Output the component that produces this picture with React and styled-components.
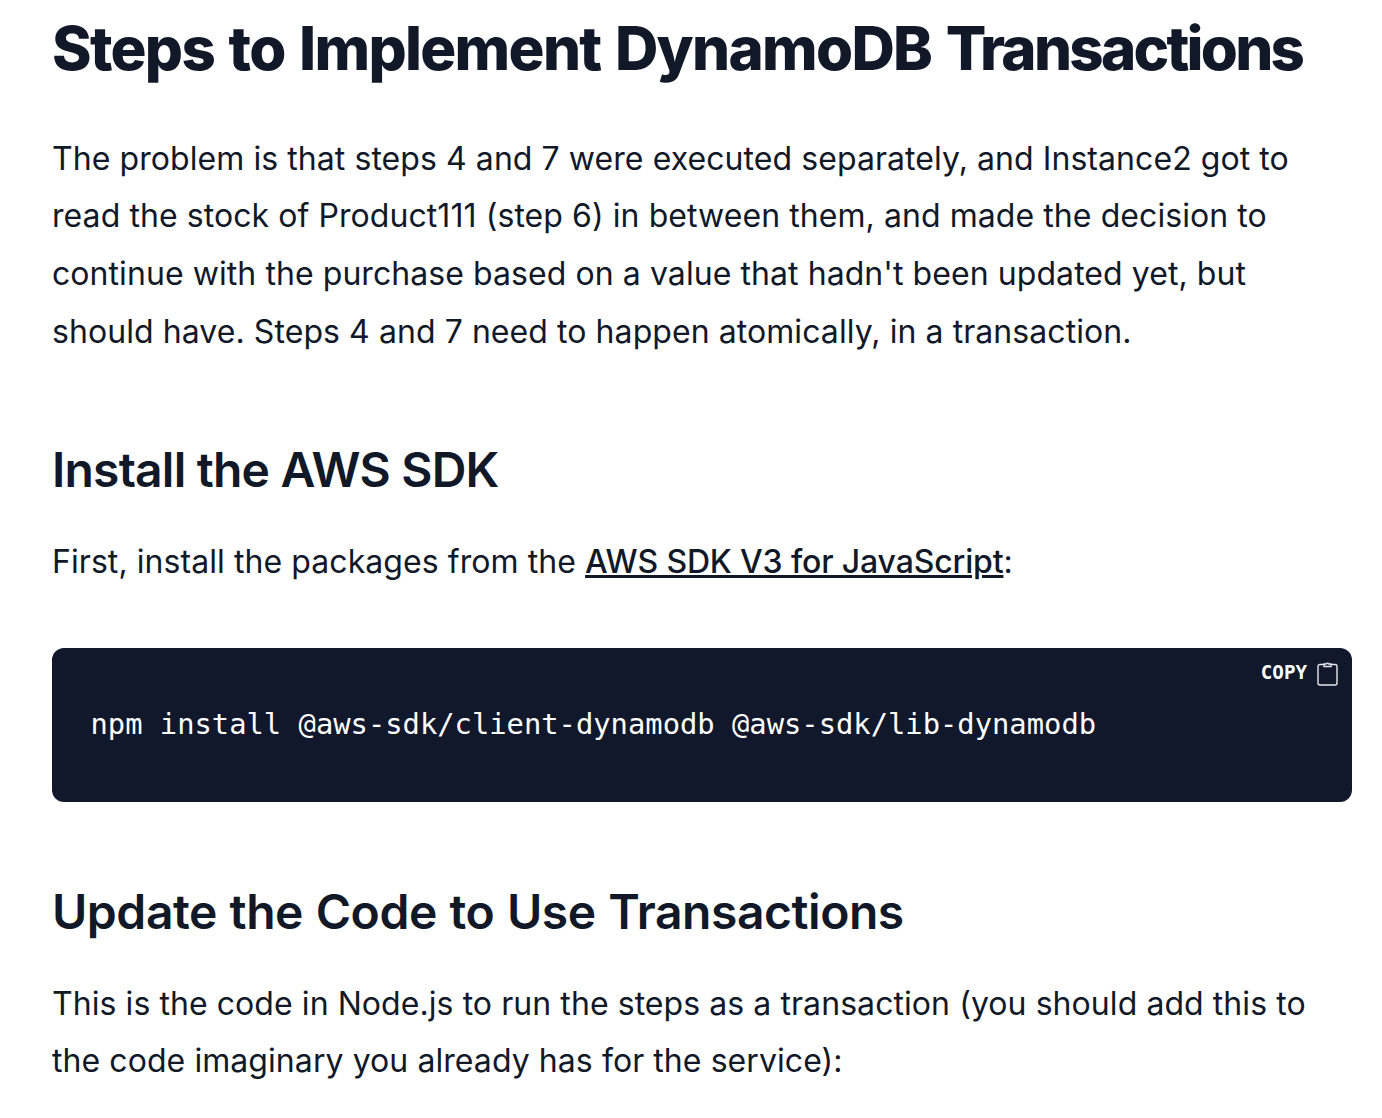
import React from "react";
import styled, { createGlobalStyle } from "styled-components";

const Global = createGlobalStyle`
  html, body { margin: 0; padding: 0; background: #fff; }
  body { font-family: Inter, "Liberation Sans", sans-serif; overflow: hidden; }
`;
const Page = styled.main`
  height: 1118px;
  overflow: hidden;
  padding: 0 30px 0 52px;
  color: #111827;
`;
const H1 = styled.h1`
  margin: 12px 0 0;
  font: 800 60px/72px Inter, sans-serif;
  letter-spacing: -1.7px;
  word-spacing: 3px;
  color: #111827;
  white-space: nowrap;
`;
const TightWord = styled.span`
  letter-spacing: -2.75px;
`;
const H2 = styled.h2`
  margin: ${(p) => p.$top}px 0 0;
  font: 600 48px/60px Inter, sans-serif;
  letter-spacing: ${(p) => p.$track}px;
  word-spacing: ${(p) => p.$gap}px;
  color: #111827;
  white-space: nowrap;
`;
const P = styled.p`
  margin: ${(p) => p.$top}px 0 0;
  font: 400 32px/57.6px Inter, sans-serif;
  letter-spacing: 0.07px;
  color: #111827;
`;
const A = styled.a`
  color: #111827;
  font-weight: 500;
  letter-spacing: -0.15px;
  text-decoration: underline;
`;
const Code = styled.div`
  position: relative;
  margin-top: 57px;
  height: 154px;
  box-sizing: border-box;
  padding: 56px 38.5px 0;
  background: #12182b;
  border-radius: 12px;
  color: #ffffff;
  font: 400 28.8px/40px "DejaVu Sans Mono", monospace;
`;
const Copy = styled.div`
  position: absolute;
  top: 11px;
  right: 14px;
  display: flex;
  align-items: center;
  gap: 10px;
  font: 700 19.2px/28px "DejaVu Sans Mono", monospace;
  color: #fff;
`;
const ClipIcon = () => (
  <svg width="21" height="26" viewBox="0 0 21 26" fill="none" stroke="#e5e7eb" strokeWidth="1.4">
    <path d="M7 4.5H3a2 2 0 0 0-2 2V23a2 2 0 0 0 2 2h15a2 2 0 0 0 2-2V6.5a2 2 0 0 0-2-2h-4" />
    <path d="M7 6.5V4h2.2a1.4 1.4 0 0 1 2.6 0H14v2.5z" />
  </svg>
);
export default function App() {
  return (
    <Page>
      <Global />
      <H1>Steps to Implement DynamoDB <TightWord>Transactions</TightWord></H1>
      <P $top={45.8}>The problem is that steps 4 and 7 were executed separately, and Instance2 got to read the stock of Product111 (step 6) in between them, and made the decision to continue with the purchase based on a value that hadn't been updated yet, but should have. Steps 4 and 7 need to happen atomically, in a transaction.</P>
      <H2 $top={80.2} $track={-0.78} $gap={0}>Install the AWS SDK</H2>
      <P $top={33}>First, install the packages from the <A href="#">AWS SDK V3 for JavaScript</A>:</P>
      <Code>
        npm install @aws-sdk/client-dynamodb @aws-sdk/lib-dynamodb
        <Copy>COPY
          <ClipIcon />
        </Copy>
      </Code>
      <H2 $top={80} $track={-0.45} $gap={1}>Update the Code to Use Transactions</H2>
      <P $top={32.8}>This is the code in Node.js to run the steps as a transaction (you should add this to the code imaginary you already has for the service):</P>
    </Page>
  );
}
